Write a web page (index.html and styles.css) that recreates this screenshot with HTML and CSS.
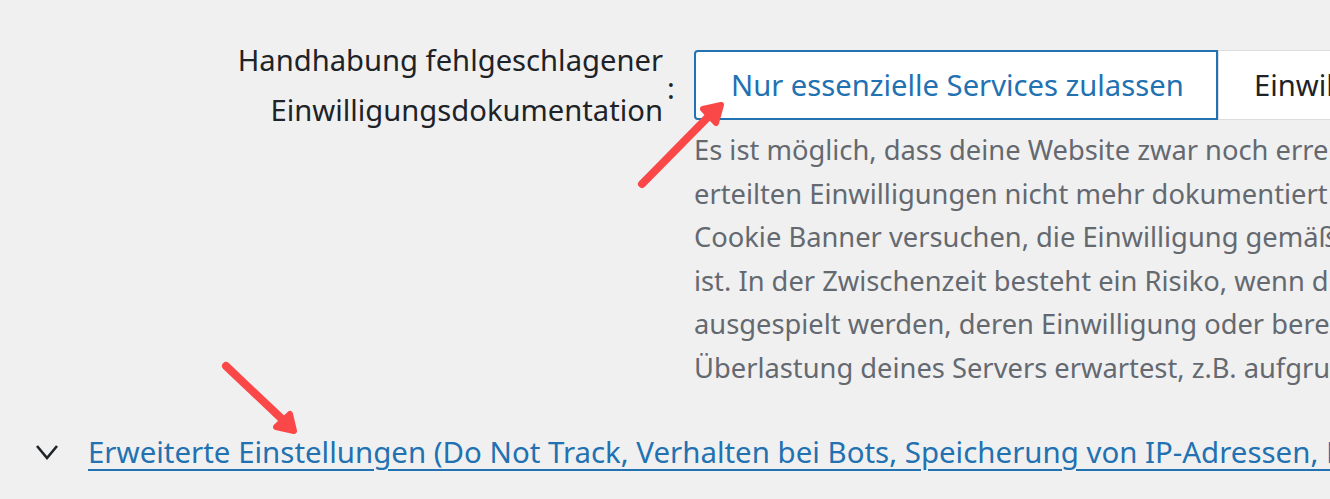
FILE: index.html
```html
<!DOCTYPE html>
<html lang="de">
<head>
    <meta charset="UTF-8">
    <title>Einstellungen</title>
    <link rel="stylesheet" href="styles.css">
</head>
<body>
    <div class="settings">
        <div class="row">
            <div class="label-col">
                <label class="label">Handhabung fehlgeschlagener<br>Einwilligungsdokumentation</label>
                <span class="colon">:</span>
            </div>
            <div class="field">
                <div class="button-group">
                    <button class="btn btn-active">Nur essenzielle Services zulassen</button>
                    <button class="btn">Einwilligung optimistisch annehmen</button>
                </div>
                <p class="description">
                    Es ist möglich, dass deine Website zwar noch erreichbar ist, aber die Einwilligungen deiner Besucher nicht<br>
                    erteilten Einwilligungen nicht mehr dokumentiert werden können. In diesem Fall wird Real<br>
                    Cookie Banner versuchen, die Einwilligung gemäß deiner Auswahl zu behandeln, bis dein Server wieder erreichbar<br>
                    ist. In der Zwischenzeit besteht ein Risiko, wenn du Services zulässt, die weiterhin<br>
                    ausgespielt werden, deren Einwilligung oder berechtigtes Interesse nicht dokumentiert werden konnte, wenn du eine<br>
                    Überlastung deines Servers erwartest, z.B. aufgrund von vielen gleichzeitigen Besuchern.
                </p>
            </div>
        </div>
        <div class="advanced">
            <svg class="chevron" width="24" height="16" viewBox="0 0 24 16">
                <polyline points="2,2 12,14 22,2" fill="none" stroke="#1d2327" stroke-width="2.6"/>
            </svg>
            <a class="advanced-link" href="#">Erweiterte Einstellungen (Do Not Track, Verhalten bei Bots, Speicherung von IP-Adressen, Lebensdauer von Einwilligungen)</a>
        </div>
    </div>

    <svg class="arrows" width="1330" height="499" viewBox="0 0 1330 499">
        <g stroke="#fa4848" fill="#fa4848" stroke-linecap="round" stroke-linejoin="round">
            <line x1="642" y1="184" x2="708" y2="117" stroke-width="8"/>
            <polygon points="721,105 703,109 716,123" stroke-width="6"/>
            <line x1="226" y1="366" x2="283" y2="420" stroke-width="8"/>
            <polygon points="294,431 276,427 290,414" stroke-width="6"/>
        </g>
    </svg>
</body>
</html>
```

FILE: styles.css
```css
body {
    margin: 0;
    padding: 0;
    width: 1330px;
    height: 499px;
    overflow: hidden;
    position: relative;
    background-color: #f0f0f1;
    font-family: "Noto Sans", "Open Sans", sans-serif;
    color: #1d2327;
}

.settings {
    padding-top: 40px;
}

.row {
    display: flex;
    align-items: flex-start;
}

.label-col {
    width: 694px;
    flex-shrink: 0;
    display: flex;
    align-items: center;
    height: 90px;
}

.label {
    width: 663px;
    text-align: right;
    font-size: 29.2px;
    line-height: 50px;
    white-space: nowrap;
}

.colon {
    font-size: 29px;
    margin-left: 4px;
    padding-top: 4px;
}

.field {
    flex-shrink: 0;
    width: 1200px;
    padding-top: 10px;
}

.button-group {
    display: flex;
}

.btn {
    height: 70px;
    font-family: inherit;
    font-size: 29.2px;
    background-color: #fff;
    color: #1d2327;
    border: 1px solid #dcdcde;
    padding: 0 35px;
    white-space: nowrap;
}

.btn-active {
    width: 524px;
    color: #2271b1;
    border: 2px solid #2271b1;
    border-radius: 4px 0 0 4px;
}

.description {
    margin: 8px 0 0;
    font-size: 27.3px;
    line-height: 43.6px;
    color: #646970;
    white-space: nowrap;
}

.advanced {
    display: flex;
    align-items: center;
    margin-top: 42px;
    padding-left: 35px;
}

.chevron {
    flex-shrink: 0;
    margin-right: 29px;
}

.advanced-link {
    font-size: 29.45px;
    line-height: 40px;
    color: #2271b1;
    white-space: nowrap;
    text-decoration-thickness: 2px;
    text-underline-offset: 6px;
}

.arrows {
    position: absolute;
    left: 0;
    top: 0;
    pointer-events: none;
}
```
